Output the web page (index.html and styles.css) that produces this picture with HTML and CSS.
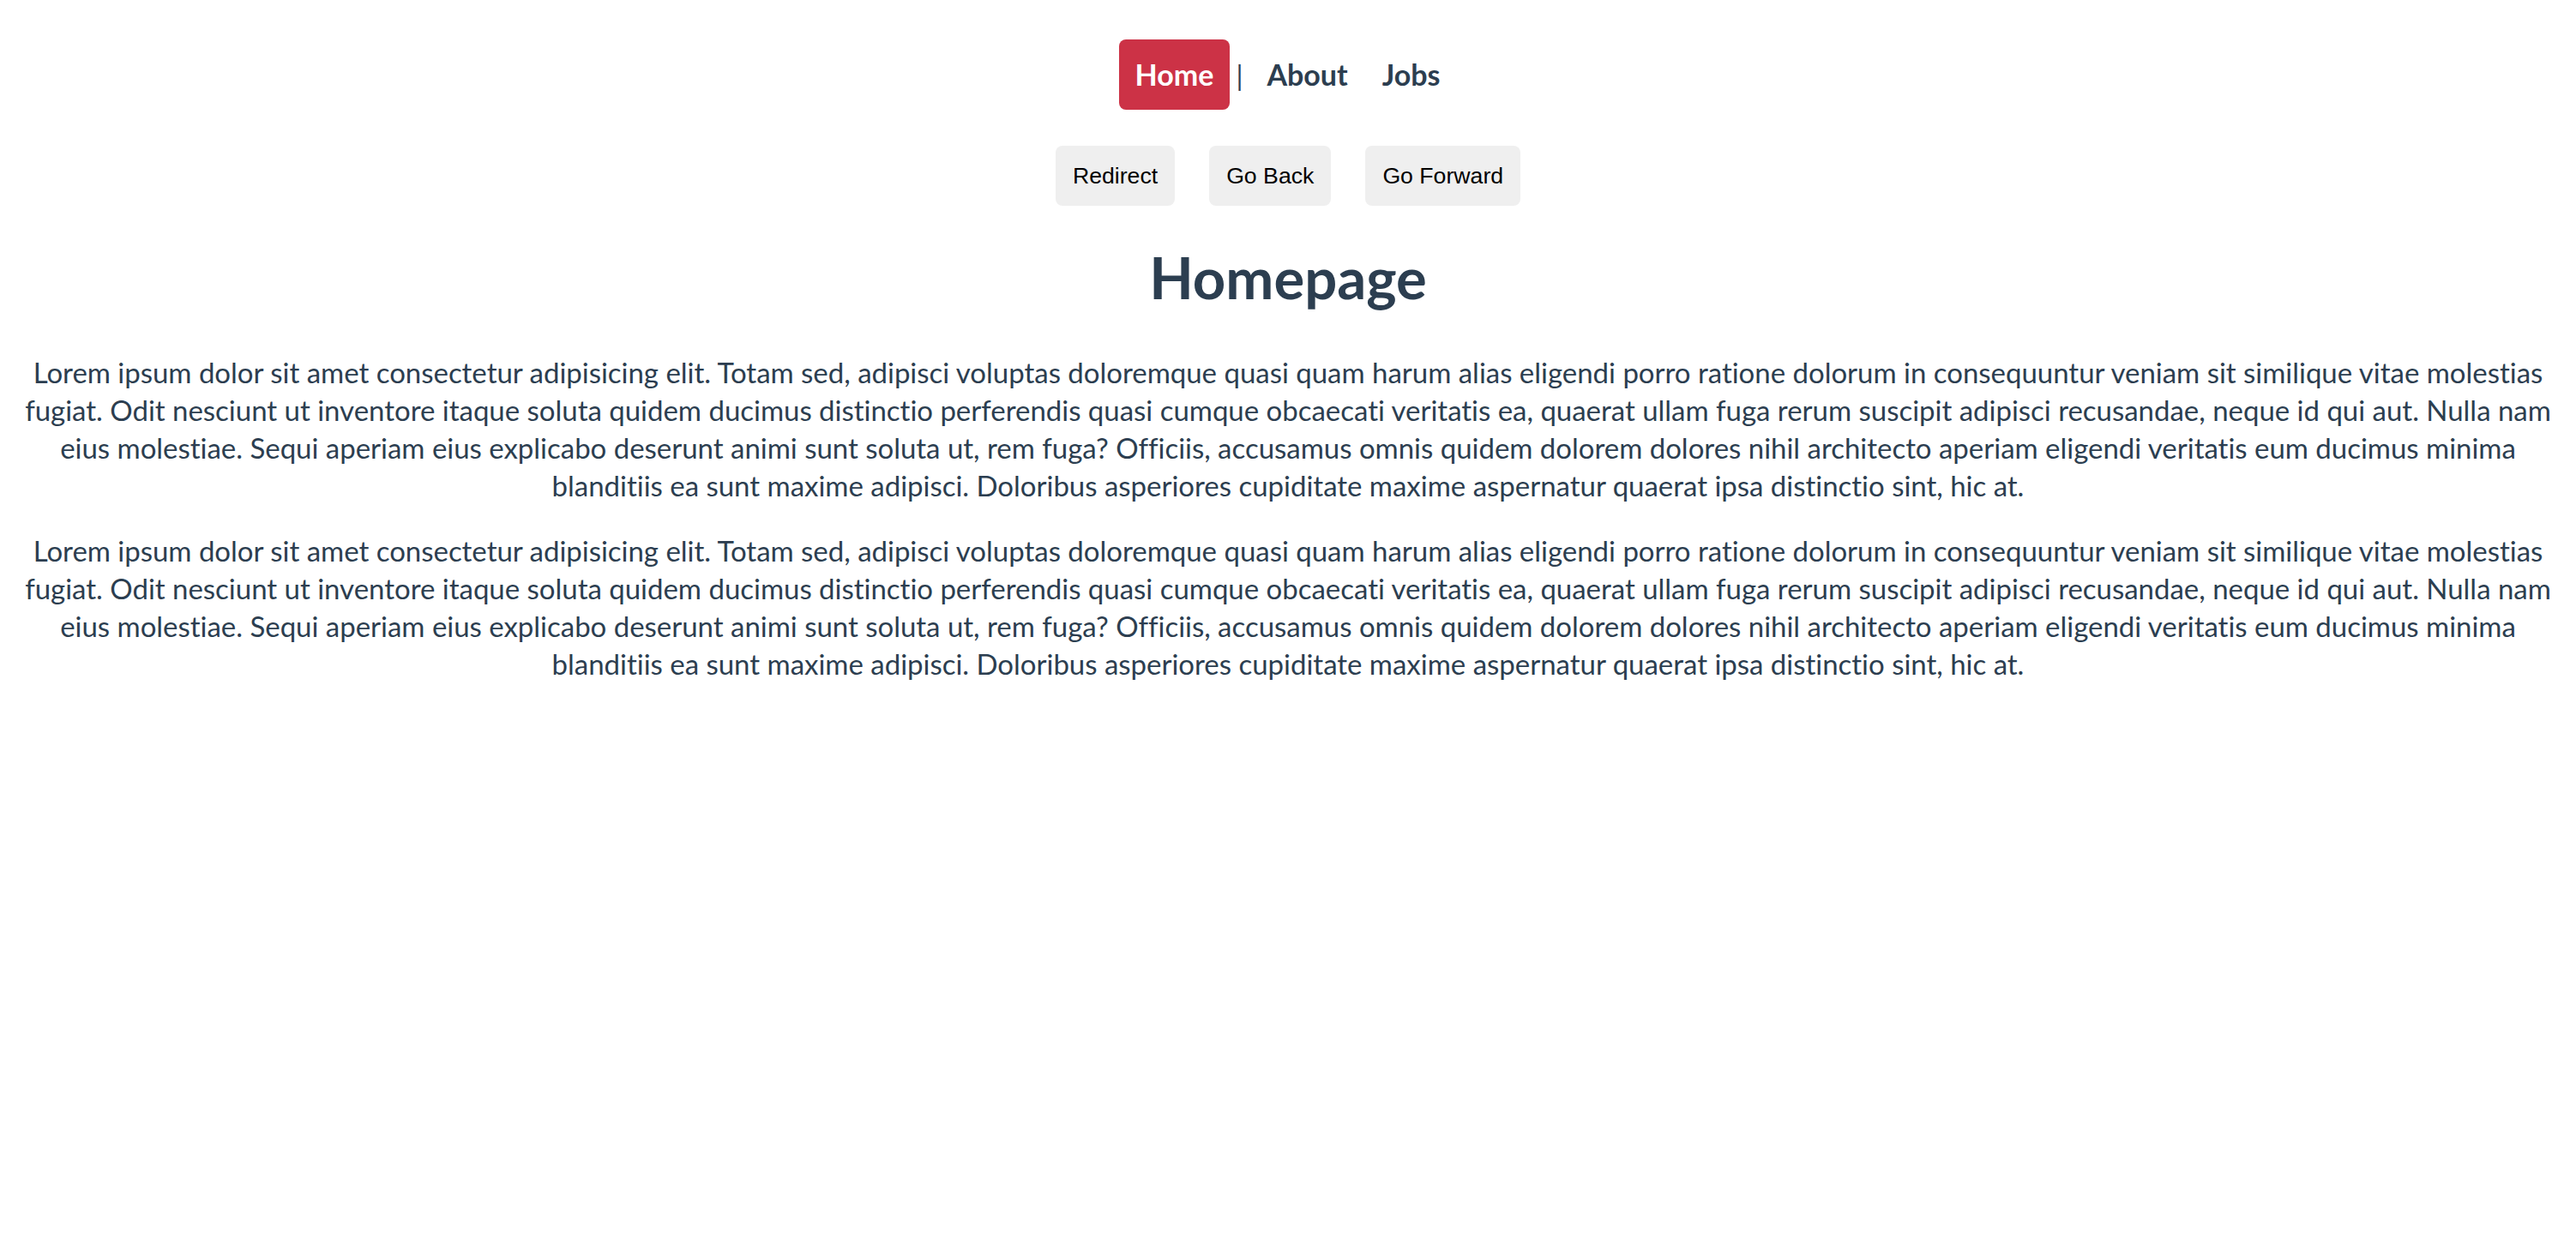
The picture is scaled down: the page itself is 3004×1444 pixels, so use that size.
FILE: index.html
```html
<!DOCTYPE html>
<html lang="en">
<head>
<meta charset="utf-8">
<title>Homepage</title>
<link rel="stylesheet" href="styles.css">
</head>
<body>
<div class="app">
  <nav class="nav">
    <a class="nav-link active" href="#">Home</a>
    <span class="sep">|</span>
    <a class="nav-link" href="#">About</a><a class="nav-link" href="#">Jobs</a>
  </nav>
  <div class="actions">
    <button class="btn">Redirect</button>
    <button class="btn">Go Back</button>
    <button class="btn">Go Forward</button>
  </div>
  <h1 class="title">Homepage</h1>
  <p class="text">Lorem ipsum dolor sit amet consectetur adipisicing elit. Totam sed, adipisci voluptas doloremque quasi quam harum alias eligendi porro ratione dolorum in consequuntur veniam sit similique vitae molestias fugiat. Odit nesciunt ut inventore itaque soluta quidem ducimus distinctio perferendis quasi cumque obcaecati veritatis ea, quaerat ullam fuga rerum suscipit adipisci recusandae, neque id qui aut. Nulla nam eius molestiae. Sequi aperiam eius explicabo deserunt animi sunt soluta ut, rem fuga? Officiis, accusamus omnis quidem dolorem dolores nihil architecto aperiam eligendi veritatis eum ducimus minima blanditiis ea sunt maxime adipisci. Doloribus asperiores cupiditate maxime aspernatur quaerat ipsa distinctio sint, hic at.</p>
  <p class="text">Lorem ipsum dolor sit amet consectetur adipisicing elit. Totam sed, adipisci voluptas doloremque quasi quam harum alias eligendi porro ratione dolorum in consequuntur veniam sit similique vitae molestias fugiat. Odit nesciunt ut inventore itaque soluta quidem ducimus distinctio perferendis quasi cumque obcaecati veritatis ea, quaerat ullam fuga rerum suscipit adipisci recusandae, neque id qui aut. Nulla nam eius molestiae. Sequi aperiam eius explicabo deserunt animi sunt soluta ut, rem fuga? Officiis, accusamus omnis quidem dolorem dolores nihil architecto aperiam eligendi veritatis eum ducimus minima blanditiis ea sunt maxime adipisci. Doloribus asperiores cupiditate maxime aspernatur quaerat ipsa distinctio sint, hic at.</p>
</div>
</body>
</html>
```
FILE: styles.css
```css
html, body {
  margin: 0;
  background: #ffffff;
}

.app {
  padding: 0 16px;
  font-family: Lato, "Open Sans", sans-serif;
  color: #2c3e50;
  text-align: center;
}

.nav {
  display: flex;
  justify-content: center;
  align-items: center;
  padding-top: 46px;
  height: 82px;
}

.nav-link {
  display: block;
  font-size: 34px;
  font-weight: 700;
  line-height: 82px;
  padding: 0 20px;
  border-radius: 8px;
  color: #2c3e50;
  text-decoration: none;
}

.nav-link.active {
  padding: 0 19px;
  background: #cc3246;
  color: #ffffff;
}

.sep {
  font-size: 32px;
  font-weight: 400;
  margin: 0 8px 0 7px;
  color: #2c3e50;
}

.actions {
  display: flex;
  justify-content: center;
  gap: 40px;
  margin-top: 42px;
}

.btn {
  font-family: "Liberation Sans", Arial, sans-serif;
  font-size: 26.67px;
  line-height: 30px;
  padding: 20px;
  border: none;
  border-radius: 8px;
  background: #efefef;
  color: #000000;
}

.title {
  font-size: 67px;
  font-weight: 700;
  line-height: 80px;
  margin: 43px 0 49px;
}

.text {
  font-size: 33px;
  letter-spacing: -0.02px;
  line-height: 44px;
  margin: 0 0 32px;
}
```
